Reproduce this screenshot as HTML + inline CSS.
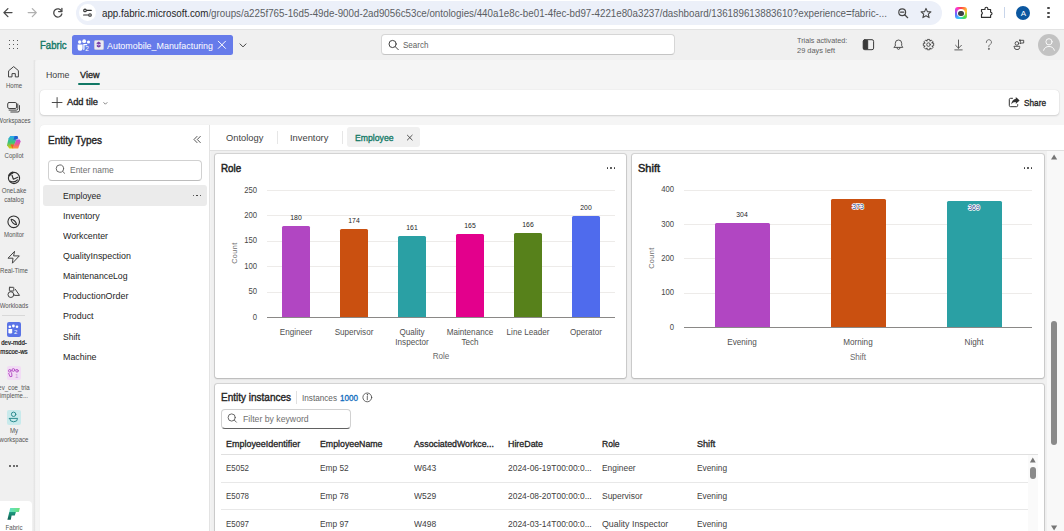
<!DOCTYPE html><html><head><meta charset="utf-8"><style>*{box-sizing:border-box;margin:0;padding:0}html,body{width:1064px;height:531px;overflow:hidden;background:#f5f5f5;font-family:"Liberation Sans",sans-serif;color:#242424;position:relative}.a{position:absolute}.t{position:absolute;white-space:nowrap;line-height:1.15;transform-origin:0 0}svg{position:absolute;overflow:visible;pointer-events:none}</style></head><body>
<div class="a" style="left:0.00px;top:0.00px;width:1064.00px;height:29.00px;background:#fff;"></div>
<div class="a" style="left:0.00px;top:29.00px;width:1064.00px;height:1.00px;background:#e3e3e3;"></div>
<div class="a" style="left:76.00px;top:1.00px;width:866.00px;height:23.50px;background:#ecf0f9;border-radius:12px;"></div>
<div class="a" style="left:79.00px;top:4.20px;width:17.00px;height:17.00px;background:#fff;border-radius:8.5px;"></div>
<div id="t1" class="t" style="left:102.00px;top:7.88px;font-size:10.20px;color:#1f1f1f;transform:translateX(0.00px) scaleX(0.9588);">app.fabric.microsoft.com<span style="color:#5b5e63">/groups/a225f765-16d5-49de-900d-2ad9056c53ce/ontologies/440a1e8c-be01-4fec-bd97-4221e80a3237/dashboard/136189613883610?experience=fabric-...</span></div>
<svg width="1064" height="531" style="left:0;top:0;" fill="none" stroke="#474747" stroke-width="1.3" stroke-linecap="round" stroke-linejoin="round"><path d="M12 12.6H3.9M7.9 8.6L3.9 12.6L7.9 16.6"/></svg>
<svg width="1064" height="531" style="left:0;top:0;" fill="none" stroke="#b0b0b0" stroke-width="1.3" stroke-linecap="round" stroke-linejoin="round"><path d="M28.2 12.6H36.3M32.3 8.6L36.3 12.6L32.3 16.6"/></svg>
<svg width="1064" height="531" style="left:0;top:0;" fill="none" stroke="#474747" stroke-width="1.3" stroke-linecap="round" stroke-linejoin="round"><path d="M61.6 11.3A4.1 4.1 0 1 0 61.8 14"/><path d="M61.9 8.3V11.6H58.6"/></svg>
<svg width="1064" height="531" style="left:0;top:0;" fill="none" stroke="#303030" stroke-width="1.1" stroke-linecap="round" stroke-linejoin="round"><circle cx="85" cy="10.4" r="1.3"/><path d="M86.8 10.4H91.3M83.6 15H88.2"/><circle cx="90" cy="15" r="1.3"/></svg>
<svg width="1064" height="531" style="left:0;top:0;" fill="none" stroke="#474747" stroke-width="1.2" stroke-linecap="round" stroke-linejoin="round"><circle cx="902.2" cy="12.2" r="3.4"/><path d="M904.7 14.8L907.7 17.7M900.6 12.2H903.8"/></svg>
<svg width="1064" height="531" style="left:0;top:0;" fill="none" stroke="#474747" stroke-width="1.1" stroke-linecap="round" stroke-linejoin="round"><path d="M926 8.4L927.4 11.6L930.9 11.9L928.3 14.2L929.1 17.6L926 15.8L922.9 17.6L923.7 14.2L921.1 11.9L924.6 11.6Z"/></svg>
<div class="a" style="left:955px;top:7.3px;width:12px;height:12px;border-radius:3px;background:conic-gradient(#f44 0deg,#fc3 70deg,#4d4 140deg,#3cf 200deg,#66f 260deg,#f3c 320deg,#f44 360deg)"></div>
<div class="a" style="left:957.00px;top:9.30px;width:8.00px;height:8.00px;background:#fff;border-radius:4px;"></div>
<div class="a" style="left:958.20px;top:10.50px;width:5.60px;height:5.60px;background:#3c4043;border-radius:3px;"></div>
<svg width="1064" height="531" style="left:0;top:0;" fill="none" stroke="#303030" stroke-width="1.15" stroke-linecap="round" stroke-linejoin="round"><path d="M981.5 9.5H985V8.6A1.4 1.4 0 0 1 987.8 8.6V9.5H990.6V12.2A1.4 1.4 0 0 1 990.6 15V17.4H981.5V14.4A1.4 1.4 0 0 0 981.5 11.8Z"/></svg>
<div class="a" style="left:1004.00px;top:7.00px;width:1.00px;height:11.00px;background:#c8d5ea;"></div>
<div class="a" style="left:1016.30px;top:5.50px;width:14.00px;height:14.00px;background:#0b57a0;border-radius:7px;"></div>
<div id="t2" class="t" style="left:1023.30px;top:8.68px;font-size:8.00px;color:#fff;transform:translateX(-2.67px) scaleX(1.0000);">A</div>
<div class="a" style="left:1047.40px;top:7.30px;width:2.20px;height:2.20px;background:#474747;border-radius:1.1px;"></div>
<div class="a" style="left:1047.40px;top:11.50px;width:2.20px;height:2.20px;background:#474747;border-radius:1.1px;"></div>
<div class="a" style="left:1047.40px;top:15.70px;width:2.20px;height:2.20px;background:#474747;border-radius:1.1px;"></div>
<div class="a" style="left:0.00px;top:30.00px;width:1064.00px;height:30.00px;background:#f0f0f0;"></div>
<div class="a" style="left:8.70px;top:39.60px;width:1.60px;height:1.60px;background:#4a4a4a;border-radius:.3px;"></div>
<div class="a" style="left:8.70px;top:43.70px;width:1.60px;height:1.60px;background:#4a4a4a;border-radius:.3px;"></div>
<div class="a" style="left:8.70px;top:47.80px;width:1.60px;height:1.60px;background:#4a4a4a;border-radius:.3px;"></div>
<div class="a" style="left:12.70px;top:39.60px;width:1.60px;height:1.60px;background:#4a4a4a;border-radius:.3px;"></div>
<div class="a" style="left:12.70px;top:43.70px;width:1.60px;height:1.60px;background:#4a4a4a;border-radius:.3px;"></div>
<div class="a" style="left:12.70px;top:47.80px;width:1.60px;height:1.60px;background:#4a4a4a;border-radius:.3px;"></div>
<div class="a" style="left:16.80px;top:39.60px;width:1.60px;height:1.60px;background:#4a4a4a;border-radius:.3px;"></div>
<div class="a" style="left:16.80px;top:43.70px;width:1.60px;height:1.60px;background:#4a4a4a;border-radius:.3px;"></div>
<div class="a" style="left:16.80px;top:47.80px;width:1.60px;height:1.60px;background:#4a4a4a;border-radius:.3px;"></div>
<div id="t3" class="t" style="left:40.40px;top:38.81px;font-size:11.00px;-webkit-text-stroke-width:0.39px;color:#117865;transform:translateX(0.00px) scaleX(0.8703);">Fabric</div>
<div class="a" style="left:72.00px;top:35.00px;width:161.00px;height:20.00px;background:#667bea;border-radius:2.5px;"></div>
<svg width="1064" height="531" style="left:0;top:0;" fill="#fff" stroke="none" stroke-width="1" stroke-linecap="round" stroke-linejoin="round"><circle cx="79.7" cy="42" r="1.7"/><circle cx="84.2" cy="41.2" r="1.9"/><circle cx="88.5" cy="42" r="1.6"/><path d="M77.6 44.5H82.6V48.5A2.3 2.1 0 0 1 77.6 48.5Z"/><path d="M83.3 44H87.2V45.2H84.5V49.6L83.3 50.2Z"/></svg>
<div id="t4" class="t" style="left:85.20px;top:44.77px;font-size:6.50px;color:#fff;transform:translateX(0.00px) scaleX(1.0000);">2</div>
<div class="a" style="left:93.50px;top:39.60px;width:10.40px;height:10.00px;background:#ebeaf5;border-radius:1.5px;border:1px solid #c9c9d9;"></div>
<svg width="1064" height="531" style="left:0;top:0;" fill="#7b3fa8" stroke="none" stroke-width="1" stroke-linecap="round" stroke-linejoin="round"><path d="M98.7 41.6L101.2 43.2L98.7 44.8L96.2 43.2Z"/><path d="M96.8 44.5V46.6A2 1.2 0 0 0 100.6 46.6V44.5L98.7 45.6Z"/></svg>
<div id="t5" class="t" style="left:107.00px;top:39.84px;font-size:9.60px;color:#fff;transform:translateX(0.00px) scaleX(0.9287);">Automobile_Manufacturing</div>
<svg width="1064" height="531" style="left:0;top:0;" fill="none" stroke="#fff" stroke-width="1" stroke-linecap="round" stroke-linejoin="round"><path d="M218.3 41.2L225.5 48.4M225.5 41.2L218.3 48.4"/></svg>
<svg width="1064" height="531" style="left:0;top:0;" fill="none" stroke="#424242" stroke-width="1" stroke-linecap="round" stroke-linejoin="round"><path d="M240 43.9L243 46.9L246 43.9"/></svg>
<div class="a" style="left:381.00px;top:34.00px;width:294.00px;height:21.00px;background:#fff;border-radius:4px;border:1px solid #d6d6d6;border-bottom-color:#c4c4c4;"></div>
<svg width="1064" height="531" style="left:0;top:0;" fill="none" stroke="#424242" stroke-width="1" stroke-linecap="round" stroke-linejoin="round"><circle cx="392.6" cy="44" r="3.6"/><path d="M395.3 46.7L398.3 49.7"/></svg>
<div id="t6" class="t" style="left:402.60px;top:40.01px;font-size:9.30px;color:#616161;transform:translateX(0.00px) scaleX(0.8653);">Search</div>
<div id="t7" class="t" style="left:797.00px;top:36.18px;font-size:8.00px;color:#616161;transform:translateX(0.00px) scaleX(0.9025);">Trials activated:</div>
<div id="t8" class="t" style="left:797.00px;top:46.38px;font-size:8.00px;color:#616161;transform:translateX(0.00px) scaleX(0.9286);">29 days left</div>
<svg width="1064" height="531" style="left:0;top:0;" fill="none" stroke="#3a3a3a" stroke-width="1" stroke-linecap="round" stroke-linejoin="round"><rect x="863.2" y="39.7" width="10.4" height="10" rx="1.6"/><path d="M864 40.5H867.7V49H864Z" fill="#3a3a3a"/></svg>
<svg width="1064" height="531" style="left:0;top:0;" fill="none" stroke="#424242" stroke-width="0.9" stroke-linecap="round" stroke-linejoin="round"><path d="M894.2 47.4H902.8L901.7 45.7V43.3A3.2 3.3 0 0 0 895.3 43.3V45.7Z"/><path d="M897 47.7A1.5 1.7 0 0 0 900 47.7"/></svg>
<svg width="1064" height="531" style="left:0;top:0;" fill="none" stroke="#424242" stroke-width="0.9" stroke-linecap="round" stroke-linejoin="round"><path d="M933.67 43.44 L933.67 45.76 L931.96 46.40 L932.22 45.77 L932.98 47.44 L931.34 49.08 L929.67 48.32 L930.30 48.06 L929.66 49.77 L927.34 49.77 L926.70 48.06 L927.33 48.32 L925.66 49.08 L924.02 47.44 L924.78 45.77 L925.04 46.40 L923.33 45.76 L923.33 43.44 L925.04 42.80 L924.78 43.43 L924.02 41.76 L925.66 40.12 L927.33 40.88 L926.70 41.14 L927.34 39.43 L929.66 39.43 L930.30 41.14 L929.67 40.88 L931.34 40.12 L932.98 41.76 L932.22 43.43 L931.96 42.80Z"/><circle cx="928.5" cy="44.6" r="1.8"/></svg>
<svg width="1064" height="531" style="left:0;top:0;" fill="none" stroke="#424242" stroke-width="0.85" stroke-linecap="round" stroke-linejoin="round"><path d="M958.5 40V48.2M955.6 45.3L958.5 48.2L961.4 45.3M954.8 49.9H962.2"/></svg>
<svg width="1064" height="531" style="left:0;top:0;" fill="none" stroke="#555" stroke-width="0.8" stroke-linecap="round" stroke-linejoin="round"><path d="M986.3 42.5A2.6 2.6 0 1 1 990 44.6C988.9 45.2 988.8 45.9 988.8 46.8"/><circle cx="988.8" cy="48.9" r=".45" fill="#555"/></svg>
<svg width="1064" height="531" style="left:0;top:0;" fill="none" stroke="#424242" stroke-width="0.9" stroke-linecap="round" stroke-linejoin="round"><circle cx="1016.9" cy="43.4" r="1.8"/><path d="M1014.3 46.3H1019.7V47.6A2.7 2 0 0 1 1014.3 47.6Z"/><path d="M1019.4 40.3H1023.7V43H1021.2L1020.3 44V40.3Z"/></svg>
<div class="a" style="left:1038.00px;top:33.50px;width:22.00px;height:22.00px;background:#c2c2c2;border-radius:11px;"></div>
<svg width="1064" height="531" style="left:0;top:0;" fill="none" stroke="#fff" stroke-width="0.9" stroke-linecap="round" stroke-linejoin="round"><circle cx="1049" cy="41.8" r="3.1"/><path d="M1043.6 50.3A5.6 5.2 0 0 1 1054.4 50.3"/></svg>
<div class="a" style="left:0.00px;top:60.00px;width:1064.00px;height:471.00px;background:#f0f0f0;"></div>
<div class="a" style="left:35.00px;top:60.00px;width:1029.00px;height:471.00px;background:#f5f5f5;border-radius:3px 0 0 0;"></div>
<svg width="1064" height="531" style="left:0;top:0;" fill="none" stroke="#424242" stroke-width="1" stroke-linecap="round" stroke-linejoin="round"><path d="M8.9 70.6L13.66 66.6L18.4 70.6V76.9H15.3V73.6H12V76.9H8.9Z"/></svg>
<div id="t9" class="t" style="left:13.70px;top:81.51px;font-size:6.60px;color:#555555;transform:translateX(-8.09px) scaleX(0.9200);">Home</div>
<svg width="1064" height="531" style="left:0;top:0;" fill="none" stroke="#424242" stroke-width="1" stroke-linecap="round" stroke-linejoin="round"><rect x="7.7" y="102.5" width="8.9" height="6" rx="1.4"/><path d="M9.1 110.1H16.3A1.5 1.5 0 0 0 17.8 108.6V104M10.8 112H17.9A1.7 1.7 0 0 0 19.5 110.4V105.6"/></svg>
<div id="t10" class="t" style="left:14.00px;top:116.71px;font-size:6.60px;color:#555555;transform:translateX(-16.63px) scaleX(0.9200);">Workspaces</div>
<svg width="1064" height="531" style="left:0;top:0"><defs><linearGradient id="cg1" x1="0" y1="0" x2="0" y2="1"><stop offset="0" stop-color="#2aa7f0"/><stop offset=".5" stop-color="#3bc47a"/><stop offset="1" stop-color="#e8c800"/></linearGradient><linearGradient id="cg2" x1="0" y1="0" x2="0" y2="1"><stop offset="0" stop-color="#b44ee8"/><stop offset=".55" stop-color="#ef5a8c"/><stop offset="1" stop-color="#ff9a30"/></linearGradient></defs><path d="M10.2 136.1H17.6L13.2 148.5H9.3L7 145.2L8.6 138.2Z" fill="url(#cg1)"/><path d="M14.6 136.1H17.3L18.4 138.6L13.5 140Z" fill="#1f5fd0"/><path d="M12.5 148.6H18.2L20.6 141.5L19.8 139.4H16.4Z" fill="url(#cg2)"/><path d="M10.5 144.5L12.5 148.6L13.8 144.5Z" fill="#f05a28"/></svg>
<div id="t11" class="t" style="left:13.60px;top:151.81px;font-size:6.60px;color:#555555;transform:translateX(-9.44px) scaleX(0.9200);">Copilot</div>
<svg width="1064" height="531" style="left:0;top:0;" fill="none" stroke="#303030" stroke-width="1.15" stroke-linecap="round" stroke-linejoin="round"><circle cx="14" cy="178" r="5.6"/><path d="M12 175.3L13.4 179.2L17.8 177.3M10.3 181.2C12.5 182.2 15.5 182 17.5 179.9"/><path d="M9.3 175.2A5.4 5.4 0 0 1 12.6 172.6" stroke-width="2.2"/></svg>
<div id="t12" class="t" style="left:13.80px;top:187.01px;font-size:6.60px;color:#555555;transform:translateX(-12.31px) scaleX(0.9200);">OneLake</div>
<div id="t13" class="t" style="left:13.60px;top:196.31px;font-size:6.60px;color:#555555;transform:translateX(-9.78px) scaleX(0.9200);">catalog</div>
<svg width="1064" height="531" style="left:0;top:0;" fill="none" stroke="#303030" stroke-width="1.1" stroke-linecap="round" stroke-linejoin="round"><circle cx="13.7" cy="221.8" r="5.8"/><path d="M11.1 219.2C13.6 219.3 16.4 222.1 16.5 224.6C14 224.5 11.2 221.7 11.1 219.2Z"/></svg>
<div id="t14" class="t" style="left:13.70px;top:231.41px;font-size:6.60px;color:#555555;transform:translateX(-10.12px) scaleX(0.9200);">Monitor</div>
<svg width="1064" height="531" style="left:0;top:0;" fill="none" stroke="#424242" stroke-width="1" stroke-linecap="round" stroke-linejoin="round"><path d="M14.3 251.6L8 258.2H13L12.4 263.2L19.3 255.9H14Z"/></svg>
<div id="t15" class="t" style="left:13.50px;top:267.01px;font-size:6.60px;color:#555555;transform:translateX(-13.88px) scaleX(0.9200);">Real-Time</div>
<svg width="1064" height="531" style="left:0;top:0;" fill="none" stroke="#424242" stroke-width="1" stroke-linecap="round" stroke-linejoin="round"><rect x="9.4" y="287.3" width="4.4" height="3.7" rx=".4"/><circle cx="10.9" cy="294.6" r="2.9"/><path d="M15.4 289.4L19.5 295.4H14.6"/></svg>
<div id="t16" class="t" style="left:14.00px;top:301.81px;font-size:6.60px;color:#555555;transform:translateX(-14.27px) scaleX(0.9200);">Workloads</div>
<div class="a" style="left:2.00px;top:315.00px;width:23.00px;height:1.00px;background:#d8d8d8;"></div>
<div class="a" style="left:6.80px;top:321.60px;width:14.00px;height:15.00px;background:#5a73e6;border-radius:2px;"></div>
<svg width="1064" height="531" style="left:0;top:0;" fill="#fff" stroke="none" stroke-width="1" stroke-linecap="round" stroke-linejoin="round"><circle cx="9.8" cy="326.8" r="1.3"/><circle cx="13.4" cy="326" r="1.4"/><circle cx="17" cy="326.8" r="1.3"/><path d="M8.4 329H12.2V332.3A1.3 1.3 0 0 1 10.9 333.6H9.7A1.3 1.3 0 0 1 8.4 332.3Z"/></svg>
<div id="t17" class="t" style="left:14.10px;top:328.76px;font-size:6.00px;color:#fff;transform:translateX(0.00px) scaleX(1.0000);">2</div>
<div id="t18" class="t" style="left:13.50px;top:338.71px;font-size:6.60px;-webkit-text-stroke-width:0.23px;color:#242424;transform:translateX(-12.82px) scaleX(0.9200);">dev-mdd-</div>
<div id="t19" class="t" style="left:13.50px;top:347.71px;font-size:6.60px;-webkit-text-stroke-width:0.23px;color:#242424;transform:translateX(-13.66px) scaleX(0.9200);">mscoe-ws</div>
<div class="a" style="left:6.80px;top:365.80px;width:14.00px;height:14.70px;background:#f2dcf5;border-radius:2px;"></div>
<svg width="1064" height="531" style="left:0;top:0;" fill="none" stroke="#b146c2" stroke-width="0.9" stroke-linecap="round" stroke-linejoin="round"><circle cx="9.8" cy="370.8" r="1.3"/><circle cx="13.4" cy="370" r="1.4"/><circle cx="17" cy="370.8" r="1.3"/><path d="M8.7 373.3L10 376.7L12 376.3L11.6 372.8"/></svg>
<div id="t20" class="t" style="left:15.10px;top:372.66px;font-size:6.00px;color:#c890d8;transform:translateX(0.00px) scaleX(1.0000);">1</div>
<div id="t21" class="t" style="left:14.00px;top:383.61px;font-size:6.60px;color:#555555;transform:translateX(-15.68px) scaleX(0.9200);">ev_coe_tria</div>
<div id="t22" class="t" style="left:14.00px;top:391.51px;font-size:6.60px;color:#555555;transform:translateX(-13.99px) scaleX(0.9200);">impleme...</div>
<div class="a" style="left:6.80px;top:409.80px;width:14.00px;height:14.90px;background:#c8eaec;border-radius:2px;"></div>
<svg width="1064" height="531" style="left:0;top:0;" fill="none" stroke="#2b8c90" stroke-width="1" stroke-linecap="round" stroke-linejoin="round"><circle cx="13.6" cy="414.3" r="2.2"/><path d="M9.6 418.4H17.6A4 3.4 0 0 1 9.6 418.4Z"/></svg>
<div id="t23" class="t" style="left:13.60px;top:427.41px;font-size:6.60px;color:#555555;transform:translateX(-4.05px) scaleX(0.9200);">My</div>
<div id="t24" class="t" style="left:13.80px;top:436.01px;font-size:6.60px;color:#555555;transform:translateX(-14.50px) scaleX(0.9200);">workspace</div>
<div class="a" style="left:9.00px;top:465.20px;width:2.00px;height:2.00px;background:#424242;border-radius:1px;"></div>
<div class="a" style="left:12.70px;top:465.20px;width:2.00px;height:2.00px;background:#424242;border-radius:1px;"></div>
<div class="a" style="left:16.40px;top:465.20px;width:2.00px;height:2.00px;background:#424242;border-radius:1px;"></div>
<div class="a" style="left:0.00px;top:501.20px;width:32.00px;height:30.00px;background:#fff;border-radius:0 4px 0 0;"></div>
<svg width="1064" height="531" style="left:0;top:0"><defs><linearGradient id="fg1" x1="0" y1="0" x2="1" y2="0"><stop offset="0" stop-color="#5fe0c8"/><stop offset="1" stop-color="#6fe07a"/></linearGradient><linearGradient id="fg2" x1="0" y1="0" x2="0" y2="1"><stop offset="0" stop-color="#1f9c80"/><stop offset="1" stop-color="#0c5e52"/></linearGradient></defs><path d="M10.2 507.9H19.9L18.9 512H9.3Z" fill="url(#fg1)"/><path d="M9.3 512H15.9L14.8 515.6H11.6L10.8 519.8H7.4Z" fill="url(#fg2)"/></svg>
<div id="t25" class="t" style="left:13.70px;top:523.71px;font-size:6.60px;color:#555555;transform:translateX(-8.43px) scaleX(0.9200);">Fabric</div>
<div class="a" style="left:33.00px;top:60.00px;width:3.00px;height:471.00px;background:linear-gradient(90deg,rgba(0,0,0,0),rgba(0,0,0,.05) 45%,rgba(0,0,0,.02) 70%,rgba(0,0,0,0));"></div>
<div id="t26" class="t" style="left:45.50px;top:69.59px;font-size:9.00px;color:#424242;transform:translateX(0.00px) scaleX(0.9785);">Home</div>
<div id="t27" class="t" style="left:79.50px;top:69.59px;font-size:9.00px;-webkit-text-stroke-width:0.32px;color:#242424;transform:translateX(0.00px) scaleX(1.0073);">View</div>
<div class="a" style="left:78.00px;top:83.30px;width:22.00px;height:2.00px;background:#117865;border-radius:1px;"></div>
<div class="a" style="left:40.00px;top:90.00px;width:1019.00px;height:25.00px;background:#fff;border-radius:4px;box-shadow:0 0 1px rgba(0,0,0,.16),0 1px 2px rgba(0,0,0,.14);"></div>
<svg width="1064" height="531" style="left:0;top:0;" fill="none" stroke="#383838" stroke-width="0.9" stroke-linecap="round" stroke-linejoin="round"><path d="M57.1 97.6V107.4M52.2 102.5H62"/></svg>
<div id="t28" class="t" style="left:67.20px;top:96.69px;font-size:9.00px;-webkit-text-stroke-width:0.32px;color:#242424;transform:translateX(0.00px) scaleX(1.0323);">Add tile</div>
<svg width="1064" height="531" style="left:0;top:0;" fill="none" stroke="#616161" stroke-width="0.8" stroke-linecap="round" stroke-linejoin="round"><path d="M103.8 102.6L105.4 104.2L107 102.6"/></svg>
<svg width="1064" height="531" style="left:0;top:0;" fill="none" stroke="#303030" stroke-width="1" stroke-linecap="round" stroke-linejoin="round"><path d="M1012.5 98.3H1010.6A1.3 1.3 0 0 0 1009.3 99.6V105.4A1.3 1.3 0 0 0 1010.6 106.7H1016.4A1.3 1.3 0 0 0 1017.7 105.4V104.6"/></svg>
<svg width="1064" height="531" style="left:0;top:0;" fill="#303030" stroke="none" stroke-width="1" stroke-linecap="round" stroke-linejoin="round"><path d="M1015.8 96.9L1019.6 100.4L1015.8 103.9V102.1C1013.6 102.1 1012.2 102.9 1011.2 104.6C1011.5 101.6 1013 99.3 1015.8 98.8Z"/></svg>
<div id="t29" class="t" style="left:1024.00px;top:97.99px;font-size:9.00px;-webkit-text-stroke-width:0.32px;color:#242424;transform:translateX(0.00px) scaleX(0.9155);">Share</div>
<div class="a" style="left:40.00px;top:125.00px;width:170.00px;height:406.00px;background:#fff;border-radius:4px 0 0 0;box-shadow:0 0 1px rgba(0,0,0,.10);"></div>
<div id="t30" class="t" style="left:48.00px;top:134.21px;font-size:11.00px;-webkit-text-stroke-width:0.39px;color:#242424;transform:translateX(0.00px) scaleX(0.9059);">Entity Types</div>
<svg width="1064" height="531" style="left:0;top:0;" fill="none" stroke="#424242" stroke-width="0.9" stroke-linecap="round" stroke-linejoin="round"><path d="M197 136.4L194 139.5L197 142.6M200.3 136.4L197.3 139.5L200.3 142.6"/></svg>
<div class="a" style="left:48.00px;top:160.00px;width:153.50px;height:20.50px;background:#fff;border:1px solid #d1d1d1;border-bottom-color:#bdbdbd;border-radius:4px;"></div>
<svg width="1064" height="531" style="left:0;top:0;" fill="none" stroke="#616161" stroke-width="0.95" stroke-linecap="round" stroke-linejoin="round"><circle cx="59.9" cy="168.6" r="3.7"/><path d="M62.6 171.3L64.6 173.3"/></svg>
<div id="t31" class="t" style="left:69.90px;top:165.25px;font-size:9.40px;color:#707070;transform:translateX(0.00px) scaleX(0.9016);">Enter name</div>
<div class="a" style="left:43.00px;top:185.00px;width:163.50px;height:20.50px;background:#ebebeb;border-radius:3px;"></div>
<div class="a" style="left:192.50px;top:194.60px;width:1.80px;height:1.80px;background:#303030;border-radius:.9px;"></div>
<div class="a" style="left:196.10px;top:194.60px;width:1.80px;height:1.80px;background:#303030;border-radius:.9px;"></div>
<div class="a" style="left:199.70px;top:194.60px;width:1.80px;height:1.80px;background:#303030;border-radius:.9px;"></div>
<div id="t32" class="t" style="left:63.00px;top:191.19px;font-size:9.00px;color:#242424;transform:translateX(0.00px) scaleX(0.9493);">Employee</div>
<div id="t33" class="t" style="left:63.00px;top:211.09px;font-size:9.00px;color:#242424;transform:translateX(0.00px) scaleX(0.9938);">Inventory</div>
<div id="t34" class="t" style="left:63.00px;top:230.99px;font-size:9.00px;color:#242424;transform:translateX(0.00px) scaleX(0.9813);">Workcenter</div>
<div id="t35" class="t" style="left:63.00px;top:251.19px;font-size:9.00px;color:#242424;transform:translateX(0.00px) scaleX(0.9834);">QualityInspection</div>
<div id="t36" class="t" style="left:63.00px;top:271.19px;font-size:9.00px;color:#242424;transform:translateX(0.00px) scaleX(0.9705);">MaintenanceLog</div>
<div id="t37" class="t" style="left:63.00px;top:291.39px;font-size:9.00px;color:#242424;transform:translateX(0.00px) scaleX(0.9902);">ProductionOrder</div>
<div id="t38" class="t" style="left:63.00px;top:311.39px;font-size:9.00px;color:#242424;transform:translateX(0.00px) scaleX(0.9861);">Product</div>
<div id="t39" class="t" style="left:63.00px;top:331.69px;font-size:9.00px;color:#242424;transform:translateX(0.00px) scaleX(0.9436);">Shift</div>
<div id="t40" class="t" style="left:63.00px;top:351.89px;font-size:9.00px;color:#242424;transform:translateX(0.00px) scaleX(0.9844);">Machine</div>
<div class="a" style="left:210.00px;top:125.00px;width:854.00px;height:25.00px;background:#fff;"></div>
<div class="a" style="left:210.00px;top:149.50px;width:854.00px;height:1.00px;background:#e0e0e0;"></div>
<div class="a" style="left:208.70px;top:125.00px;width:1.00px;height:406.00px;background:#e3e3e3;"></div>
<div class="a" style="left:210.50px;top:150.50px;width:853.50px;height:380.50px;background:#f0f0f0;"></div>
<div id="t41" class="t" style="left:225.70px;top:132.85px;font-size:9.40px;color:#424242;transform:translateX(0.00px) scaleX(0.9938);">Ontology</div>
<div class="a" style="left:276.50px;top:131.00px;width:1.00px;height:13.00px;background:#e6e6e6;"></div>
<div id="t42" class="t" style="left:289.60px;top:132.85px;font-size:9.40px;color:#424242;transform:translateX(0.00px) scaleX(0.9958);">Inventory</div>
<div class="a" style="left:341.50px;top:131.00px;width:1.00px;height:13.00px;background:#e6e6e6;"></div>
<div class="a" style="left:346.70px;top:127.20px;width:73.00px;height:19.80px;background:#f0f0f0;border-radius:3px;"></div>
<div id="t43" class="t" style="left:355.00px;top:132.85px;font-size:9.40px;-webkit-text-stroke-width:0.33px;color:#117865;transform:translateX(0.00px) scaleX(0.9256);">Employee</div>
<svg width="1064" height="531" style="left:0;top:0;" fill="none" stroke="#424242" stroke-width="0.9" stroke-linecap="round" stroke-linejoin="round"><path d="M407.4 135.2L412.2 140M412.2 135.2L407.4 140"/></svg>
<div class="a" style="left:215.00px;top:153.60px;width:411.00px;height:224.10px;background:#fff;border-radius:2px;box-shadow:0 0 0 .8px rgba(0,0,0,.11),0 0 1.5px rgba(0,0,0,.2),0 1px 2px rgba(0,0,0,.14);"></div>
<div class="a" style="left:632.00px;top:153.60px;width:411.50px;height:224.10px;background:#fff;border-radius:2px;box-shadow:0 0 0 .8px rgba(0,0,0,.11),0 0 1.5px rgba(0,0,0,.2),0 1px 2px rgba(0,0,0,.14);"></div>
<div class="a" style="left:215.00px;top:383.80px;width:828.50px;height:160.00px;background:#fff;border-radius:2px;box-shadow:0 0 0 .8px rgba(0,0,0,.11),0 0 1.5px rgba(0,0,0,.2),0 1px 2px rgba(0,0,0,.14);"></div>
<div id="t44" class="t" style="left:220.80px;top:162.31px;font-size:11.00px;-webkit-text-stroke-width:0.39px;color:#242424;transform:translateX(0.00px) scaleX(0.8928);-webkit-text-stroke-width:.5px;">Role</div>
<div class="a" style="left:606.50px;top:167.40px;width:1.80px;height:1.80px;background:#303030;border-radius:.9px;"></div>
<div class="a" style="left:610.10px;top:167.40px;width:1.80px;height:1.80px;background:#303030;border-radius:.9px;"></div>
<div class="a" style="left:613.70px;top:167.40px;width:1.80px;height:1.80px;background:#303030;border-radius:.9px;"></div>
<div id="t45" class="t" style="left:257.40px;top:312.84px;font-size:8.40px;color:#484848;transform:translateX(-4.30px) scaleX(0.9200);">0</div>
<div class="a" style="left:267.00px;top:291.74px;width:348.00px;height:1.00px;background:#edebe9;"></div>
<div id="t46" class="t" style="left:257.40px;top:287.38px;font-size:8.40px;color:#484848;transform:translateX(-8.58px) scaleX(0.9200);">50</div>
<div class="a" style="left:267.00px;top:266.28px;width:348.00px;height:1.00px;background:#edebe9;"></div>
<div id="t47" class="t" style="left:257.40px;top:261.92px;font-size:8.40px;color:#484848;transform:translateX(-12.87px) scaleX(0.9200);">100</div>
<div class="a" style="left:267.00px;top:240.82px;width:348.00px;height:1.00px;background:#edebe9;"></div>
<div id="t48" class="t" style="left:257.40px;top:236.46px;font-size:8.40px;color:#484848;transform:translateX(-12.87px) scaleX(0.9200);">150</div>
<div class="a" style="left:267.00px;top:215.36px;width:348.00px;height:1.00px;background:#edebe9;"></div>
<div id="t49" class="t" style="left:257.40px;top:211.00px;font-size:8.40px;color:#484848;transform:translateX(-12.87px) scaleX(0.9200);">200</div>
<div class="a" style="left:267.00px;top:189.90px;width:348.00px;height:1.00px;background:#edebe9;"></div>
<div id="t50" class="t" style="left:257.40px;top:185.54px;font-size:8.40px;color:#484848;transform:translateX(-12.87px) scaleX(0.9200);">250</div>
<div class="a" style="left:267.00px;top:317.10px;width:348.00px;height:1.20px;background:#8a8886;"></div>
<div class="a" style="left:282.25px;top:226.04px;width:27.50px;height:91.16px;background:#b146c2;border-radius:1.5px 1.5px 0 0;"></div>
<div id="t51" class="t" style="left:296.00px;top:213.90px;font-size:7.20px;color:#242424;transform:translateX(-5.70px) scaleX(0.9500);">180</div>
<div id="t52" class="t" style="left:296.00px;top:328.26px;font-size:8.20px;color:#505050;transform:translateX(-16.23px) scaleX(0.9900);">Engineer</div>
<div class="a" style="left:340.25px;top:229.10px;width:27.50px;height:88.10px;background:#ca5010;border-radius:1.5px 1.5px 0 0;"></div>
<div id="t53" class="t" style="left:354.00px;top:216.95px;font-size:7.20px;color:#242424;transform:translateX(-5.70px) scaleX(0.9500);">174</div>
<div id="t54" class="t" style="left:354.00px;top:328.26px;font-size:8.20px;color:#505050;transform:translateX(-19.37px) scaleX(0.9900);">Supervisor</div>
<div class="a" style="left:398.25px;top:235.72px;width:27.50px;height:81.48px;background:#2aa0a4;border-radius:1.5px 1.5px 0 0;"></div>
<div id="t55" class="t" style="left:412.00px;top:223.57px;font-size:7.20px;color:#242424;transform:translateX(-5.70px) scaleX(0.9500);">161</div>
<div id="t56" class="t" style="left:412.00px;top:328.26px;font-size:8.20px;color:#505050;transform:translateX(-12.61px) scaleX(0.9900);">Quality</div>
<div id="t57" class="t" style="left:412.00px;top:338.16px;font-size:8.20px;color:#505050;transform:translateX(-16.68px) scaleX(0.9900);">Inspector</div>
<div class="a" style="left:456.25px;top:233.68px;width:27.50px;height:83.52px;background:#e3008c;border-radius:1.5px 1.5px 0 0;"></div>
<div id="t58" class="t" style="left:470.00px;top:221.53px;font-size:7.20px;color:#242424;transform:translateX(-5.70px) scaleX(0.9500);">165</div>
<div id="t59" class="t" style="left:470.00px;top:328.26px;font-size:8.20px;color:#505050;transform:translateX(-23.21px) scaleX(0.9900);">Maintenance</div>
<div id="t60" class="t" style="left:470.00px;top:338.16px;font-size:8.20px;color:#505050;transform:translateX(-8.56px) scaleX(0.9900);">Tech</div>
<div class="a" style="left:514.25px;top:233.17px;width:27.50px;height:84.03px;background:#57811b;border-radius:1.5px 1.5px 0 0;"></div>
<div id="t61" class="t" style="left:528.00px;top:221.02px;font-size:7.20px;color:#242424;transform:translateX(-5.70px) scaleX(0.9500);">166</div>
<div id="t62" class="t" style="left:528.00px;top:328.26px;font-size:8.20px;color:#505050;transform:translateX(-21.41px) scaleX(0.9900);">Line Leader</div>
<div class="a" style="left:572.25px;top:215.86px;width:27.50px;height:101.34px;background:#4f6bed;border-radius:1.5px 1.5px 0 0;"></div>
<div id="t63" class="t" style="left:586.00px;top:203.71px;font-size:7.20px;color:#242424;transform:translateX(-5.70px) scaleX(0.9500);">200</div>
<div id="t64" class="t" style="left:586.00px;top:328.26px;font-size:8.20px;color:#505050;transform:translateX(-15.99px) scaleX(0.9900);">Operator</div>
<div id="t65" class="t" style="left:440.60px;top:352.46px;font-size:8.20px;color:#6a6a6a;transform:translateX(-8.34px) scaleX(0.9900);">Role</div>
<div class="t" style="left:234.6px;top:253.3px;font-size:8px;color:#6e6e6e;letter-spacing:.55px;line-height:1;transform:translate(-50%,-50%) rotate(-90deg) scaleX(0.9);transform-origin:50% 50%;width:40px;text-align:center">Count</div>
<div id="t66" class="t" style="left:637.80px;top:162.31px;font-size:11.00px;-webkit-text-stroke-width:0.39px;color:#242424;transform:translateX(0.00px) scaleX(0.9993);-webkit-text-stroke-width:.5px;">Shift</div>
<div class="a" style="left:1023.50px;top:167.40px;width:1.80px;height:1.80px;background:#303030;border-radius:.9px;"></div>
<div class="a" style="left:1027.10px;top:167.40px;width:1.80px;height:1.80px;background:#303030;border-radius:.9px;"></div>
<div class="a" style="left:1030.70px;top:167.40px;width:1.80px;height:1.80px;background:#303030;border-radius:.9px;"></div>
<div id="t67" class="t" style="left:674.40px;top:322.74px;font-size:8.40px;color:#484848;transform:translateX(-4.30px) scaleX(0.9200);">0</div>
<div class="a" style="left:684.00px;top:292.70px;width:348.00px;height:1.00px;background:#edebe9;"></div>
<div id="t68" class="t" style="left:674.40px;top:288.34px;font-size:8.40px;color:#484848;transform:translateX(-12.87px) scaleX(0.9200);">100</div>
<div class="a" style="left:684.00px;top:258.30px;width:348.00px;height:1.00px;background:#edebe9;"></div>
<div id="t69" class="t" style="left:674.40px;top:253.94px;font-size:8.40px;color:#484848;transform:translateX(-12.87px) scaleX(0.9200);">200</div>
<div class="a" style="left:684.00px;top:223.90px;width:348.00px;height:1.00px;background:#edebe9;"></div>
<div id="t70" class="t" style="left:674.40px;top:219.54px;font-size:8.40px;color:#484848;transform:translateX(-12.87px) scaleX(0.9200);">300</div>
<div class="a" style="left:684.00px;top:189.50px;width:348.00px;height:1.00px;background:#edebe9;"></div>
<div id="t71" class="t" style="left:674.40px;top:185.14px;font-size:8.40px;color:#484848;transform:translateX(-12.87px) scaleX(0.9200);">400</div>
<div class="a" style="left:684.00px;top:327.00px;width:348.00px;height:1.20px;background:#8a8886;"></div>
<div class="a" style="left:714.50px;top:223.02px;width:55.00px;height:104.08px;background:#b146c2;border-radius:1.5px 1.5px 0 0;"></div>
<div id="t72" class="t" style="left:742.00px;top:210.88px;font-size:7.20px;color:#242424;transform:translateX(-5.70px) scaleX(0.9500);">304</div>
<div id="t73" class="t" style="left:742.00px;top:338.26px;font-size:8.20px;color:#505050;transform:translateX(-14.65px) scaleX(0.9900);">Evening</div>
<div class="a" style="left:830.50px;top:199.29px;width:55.00px;height:127.81px;background:#ca5010;border-radius:1.5px 1.5px 0 0;"></div>
<div id="t74" class="t" style="left:858.00px;top:203.04px;font-size:7.20px;color:#1b3a8a;transform:translateX(-5.70px) scaleX(0.9500);-webkit-text-stroke:1.6px #fff;paint-order:stroke fill;">373</div>
<div id="t75" class="t" style="left:858.00px;top:338.26px;font-size:8.20px;color:#505050;transform:translateX(-14.65px) scaleX(0.9900);">Morning</div>
<div class="a" style="left:946.50px;top:200.66px;width:55.00px;height:126.44px;background:#2aa0a4;border-radius:1.5px 1.5px 0 0;"></div>
<div id="t76" class="t" style="left:974.00px;top:204.42px;font-size:7.20px;color:#1b3a8a;transform:translateX(-5.70px) scaleX(0.9500);-webkit-text-stroke:1.6px #fff;paint-order:stroke fill;">369</div>
<div id="t77" class="t" style="left:974.00px;top:338.26px;font-size:8.20px;color:#505050;transform:translateX(-9.47px) scaleX(0.9900);">Night</div>
<div id="t78" class="t" style="left:858.00px;top:352.76px;font-size:8.20px;color:#6a6a6a;transform:translateX(-8.11px) scaleX(0.9900);">Shift</div>
<div class="t" style="left:651.8px;top:257.8px;font-size:8px;color:#6e6e6e;letter-spacing:.55px;line-height:1;transform:translate(-50%,-50%) rotate(-90deg) scaleX(0.9);transform-origin:50% 50%;width:40px;text-align:center">Count</div>
<div id="t79" class="t" style="left:220.90px;top:390.81px;font-size:11.00px;-webkit-text-stroke-width:0.39px;color:#242424;transform:translateX(0.00px) scaleX(0.9085);">Entity instances</div>
<div class="a" style="left:296.00px;top:391.00px;width:1.00px;height:13.00px;background:#e0e0e0;"></div>
<div id="t80" class="t" style="left:302.00px;top:392.79px;font-size:9.00px;color:#616161;transform:translateX(0.00px) scaleX(0.9084);">Instances</div>
<div id="t81" class="t" style="left:340.00px;top:392.79px;font-size:9.00px;-webkit-text-stroke-width:0.32px;color:#0f6cbd;transform:translateX(0.00px) scaleX(0.8986);">1000</div>
<svg width="1064" height="531" style="left:0;top:0;" fill="none" stroke="#424242" stroke-width="0.8" stroke-linecap="round" stroke-linejoin="round"><circle cx="367.3" cy="397.4" r="4.4"/><path d="M367.3 396.4V399.8"/><circle cx="367.3" cy="394.8" r=".3" fill="#424242"/></svg>
<div class="a" style="left:221.00px;top:409.00px;width:129.50px;height:19.50px;background:#fff;border:1px solid #d1d1d1;border-bottom-color:#616161;border-radius:4px;"></div>
<svg width="1064" height="531" style="left:0;top:0;" fill="none" stroke="#616161" stroke-width="0.95" stroke-linecap="round" stroke-linejoin="round"><circle cx="231.7" cy="417.5" r="3.6"/><path d="M234.3 420.1L236.4 422.2"/></svg>
<div id="t82" class="t" style="left:242.60px;top:413.81px;font-size:9.30px;color:#707070;transform:translateX(0.00px) scaleX(0.9350);">Filter by keyword</div>
<div id="t83" class="t" style="left:225.80px;top:440.00px;font-size:8.30px;-webkit-text-stroke-width:0.29px;color:#242424;transform:translateX(0.00px) scaleX(1.0798);">EmployeeIdentifier</div>
<div id="t84" class="t" style="left:319.50px;top:440.00px;font-size:8.30px;-webkit-text-stroke-width:0.29px;color:#242424;transform:translateX(0.00px) scaleX(1.0588);">EmployeeName</div>
<div id="t85" class="t" style="left:413.70px;top:440.00px;font-size:8.30px;-webkit-text-stroke-width:0.29px;color:#242424;transform:translateX(0.00px) scaleX(1.0585);">AssociatedWorkce...</div>
<div id="t86" class="t" style="left:508.00px;top:440.00px;font-size:8.30px;-webkit-text-stroke-width:0.29px;color:#242424;transform:translateX(0.00px) scaleX(1.0687);">HireDate</div>
<div id="t87" class="t" style="left:602.20px;top:440.00px;font-size:8.30px;-webkit-text-stroke-width:0.29px;color:#242424;transform:translateX(0.00px) scaleX(1.0306);">Role</div>
<div id="t88" class="t" style="left:696.50px;top:440.00px;font-size:8.30px;-webkit-text-stroke-width:0.29px;color:#242424;transform:translateX(0.00px) scaleX(1.0958);">Shift</div>
<div class="a" style="left:221.00px;top:454.20px;width:817.00px;height:1.00px;background:#e0e0e0;"></div>
<div id="t89" class="t" style="left:225.80px;top:464.10px;font-size:8.30px;color:#424242;transform:translateX(0.00px) scaleX(0.9583);">E5052</div>
<div id="t90" class="t" style="left:319.50px;top:464.10px;font-size:8.30px;color:#424242;transform:translateX(0.00px) scaleX(1.0037);">Emp 52</div>
<div id="t91" class="t" style="left:413.70px;top:464.10px;font-size:8.30px;color:#424242;transform:translateX(0.00px) scaleX(1.0282);">W643</div>
<div id="t92" class="t" style="left:508.00px;top:464.10px;font-size:8.30px;color:#424242;transform:translateX(0.00px) scaleX(1.0194);">2024-06-19T00:00:0...</div>
<div id="t93" class="t" style="left:602.20px;top:464.10px;font-size:8.30px;color:#424242;transform:translateX(0.00px) scaleX(1.0115);">Engineer</div>
<div id="t94" class="t" style="left:696.50px;top:464.10px;font-size:8.30px;color:#424242;transform:translateX(0.00px) scaleX(1.0005);">Evening</div>
<div class="a" style="left:221.00px;top:481.80px;width:807.00px;height:1.00px;background:#e8e8e8;"></div>
<div id="t95" class="t" style="left:225.80px;top:491.80px;font-size:8.30px;color:#424242;transform:translateX(0.00px) scaleX(0.9583);">E5078</div>
<div id="t96" class="t" style="left:319.50px;top:491.80px;font-size:8.30px;color:#424242;transform:translateX(0.00px) scaleX(1.0037);">Emp 78</div>
<div id="t97" class="t" style="left:413.70px;top:491.80px;font-size:8.30px;color:#424242;transform:translateX(0.00px) scaleX(1.0282);">W529</div>
<div id="t98" class="t" style="left:508.00px;top:491.80px;font-size:8.30px;color:#424242;transform:translateX(0.00px) scaleX(1.0194);">2024-08-20T00:00:0...</div>
<div id="t99" class="t" style="left:602.20px;top:491.80px;font-size:8.30px;color:#424242;transform:translateX(0.00px) scaleX(1.0209);">Supervisor</div>
<div id="t100" class="t" style="left:696.50px;top:491.80px;font-size:8.30px;color:#424242;transform:translateX(0.00px) scaleX(1.0005);">Evening</div>
<div class="a" style="left:221.00px;top:509.10px;width:807.00px;height:1.00px;background:#e8e8e8;"></div>
<div id="t101" class="t" style="left:225.80px;top:519.50px;font-size:8.30px;color:#424242;transform:translateX(0.00px) scaleX(0.9583);">E5097</div>
<div id="t102" class="t" style="left:319.50px;top:519.50px;font-size:8.30px;color:#424242;transform:translateX(0.00px) scaleX(1.0037);">Emp 97</div>
<div id="t103" class="t" style="left:413.70px;top:519.50px;font-size:8.30px;color:#424242;transform:translateX(0.00px) scaleX(1.0282);">W498</div>
<div id="t104" class="t" style="left:508.00px;top:519.50px;font-size:8.30px;color:#424242;transform:translateX(0.00px) scaleX(1.0194);">2024-03-14T00:00:0...</div>
<div id="t105" class="t" style="left:602.20px;top:519.50px;font-size:8.30px;color:#424242;transform:translateX(0.00px) scaleX(1.0648);">Quality Inspector</div>
<div id="t106" class="t" style="left:696.50px;top:519.50px;font-size:8.30px;color:#424242;transform:translateX(0.00px) scaleX(1.0005);">Evening</div>
<div class="a" style="left:1028.00px;top:455.00px;width:10.00px;height:76.00px;background:#fafafa;"></div>
<svg width="1064" height="531" style="left:0;top:0;" fill="#767676" stroke="none" stroke-width="1" stroke-linecap="round" stroke-linejoin="round"><path d="M1029.9 462.4H1035.7L1032.8 457.6Z"/></svg>
<div class="a" style="left:1030.00px;top:467.00px;width:6.00px;height:11.50px;background:#8a8a8a;border-radius:3px;"></div>
<div class="a" style="left:1047.00px;top:150.50px;width:17.00px;height:380.50px;background:#f8f8f8;"></div>
<svg width="1064" height="531" style="left:0;top:0;" fill="#767676" stroke="none" stroke-width="1" stroke-linecap="round" stroke-linejoin="round"><path d="M1051 159.4H1057.2L1054.1 154.4Z"/></svg>
<div class="a" style="left:1051.00px;top:321.00px;width:6.00px;height:124.00px;background:#8a8a8a;border-radius:3px;"></div>
<svg width="1064" height="531" style="left:0;top:0;" fill="#767676" stroke="none" stroke-width="1" stroke-linecap="round" stroke-linejoin="round"><path d="M1051 525.5H1057.2L1054.1 530.5Z"/></svg>
</body></html>
